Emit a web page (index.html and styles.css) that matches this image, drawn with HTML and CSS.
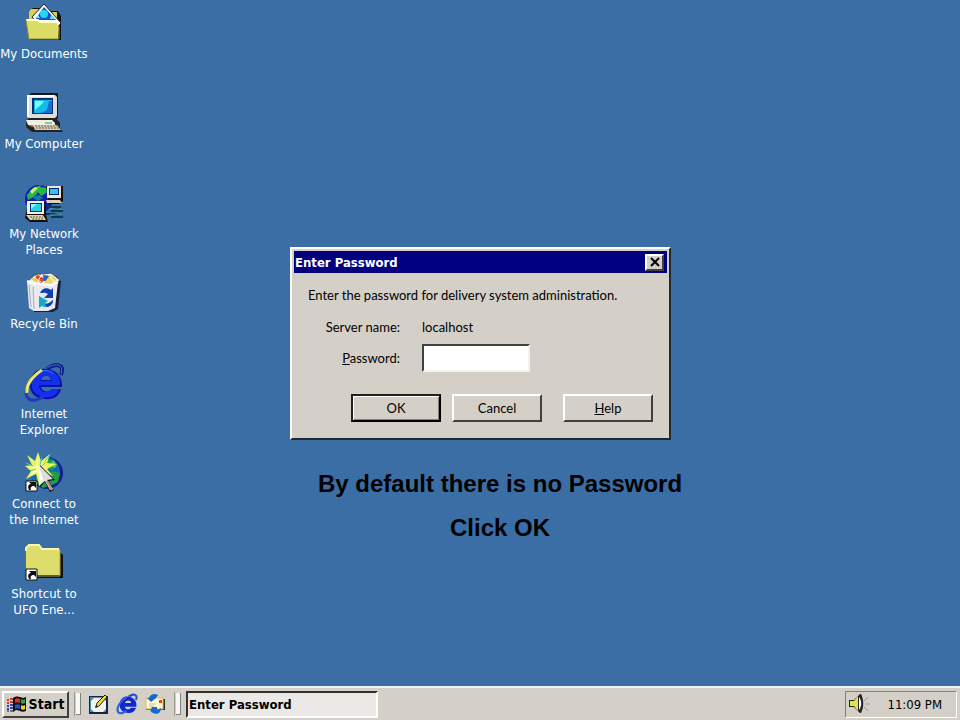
FILE: index.html
```html
<!DOCTYPE html>
<html lang="en">
<head>
    <meta charset="UTF-8">
    <meta name="viewport" content="width=device-width, initial-scale=1.0">
    <title>Enter Password</title>
    <link rel="stylesheet" href="styles.css">
</head>
<body>
    <main class="desktop">
        <nav class="icons">
            <a class="icon" href="#">
                <svg width="38" height="38" viewBox="0 0 38 38">
                    <path d="M5 35V7l3-3h8l3 3h14l3 5v24H6z" fill="#111"/>
                    <path d="M4 8l2-3h7l3 3h16v12H4z" fill="#d8d050"/>
                    <path d="M19 0l17 19-4 5-20-5-5-6z" fill="#fff" stroke="#223" stroke-width="1"/>
                    <path d="M19 3l12 13H10z" fill="#1c50c8"/>
                    <path d="M10 14l3-3 2 3zM26 11l4 4h-5z" fill="#70e8f0"/>
                    <circle cx="19" cy="10" r="4" fill="#20d8f0"/>
                    <path d="M1 16h10l2 2h19v3l2 2-1 12H4z" fill="#dcdc68"/>
                    <path d="M1 16h12l2 2h17" fill="none" stroke="#ffffd0" stroke-width="2"/>
                    <path d="M1 16l3 19h30V22" fill="none" stroke="#98903c"/>
                </svg>
                <span>My Documents</span>
            </a>
            <a class="icon" href="#">
                <svg width="38" height="38" viewBox="0 0 38 38">
                    <path d="M3 2l3-3h27v25l-3 3H6l-3-3z" fill="#181818"/>
                    <path d="M2 1h28l2 2v19l-3 3H4l-2-3z" fill="#ddd"/>
                    <path d="M2 1h27v2H4v20H2z" fill="#fff"/>
                    <path d="M7 4h21v16H7z" fill="#083070"/>
                    <path d="M9 6h18v13H9z" fill="#18b8e8"/>
                    <path d="M10 7h9l-2 3-7 6z" fill="#70fff0"/>
                    <path d="M24 7h3v12H16l6-3z" fill="#1870d0"/>
                    <path d="M1 27l3-3h27l4 5v5l3 4H7L1 33z" fill="#222"/>
                    <path d="M1 26h26l3 3v2H3z" fill="#f0ede4"/>
                    <path d="M3 31h25v2H7z" fill="#92846c"/>
                    <path d="M8 31h24l4 5H10z" fill="#d8d0b8"/>
                    <path d="M10 32h22M11 34h23" fill="none" stroke="#655b43" stroke-dasharray="2 1"/>
                    <path d="M20 29h7" stroke="#30a840" stroke-width="1"/>
                </svg>
                <span>My Computer</span>
            </a>
            <a class="icon" href="#">
                <svg width="38" height="38" viewBox="0 0 38 38">
                    <circle cx="14" cy="15" r="14" fill="#1020b0"/>
                    <path d="M2 11L8 4l8-3-2 6-4 5-7 4zM15 3l8 1-2 5-5 3-3-4z" fill="#28b848"/>
                    <path d="M5 7l5-4 3 1-6 6z" fill="#d0f060"/>
                    <path d="M7 13l7-2 4 3-5 3z" fill="#108090"/>
                    <path d="M21 2h17v15l-4 3H24z" fill="#111"/>
                    <path d="M22 2h14v12H22z" fill="#e8e8e0"/>
                    <path d="M24 4h10v7H24z" fill="#102070"/>
                    <path d="M25 5h8v5h-8z" fill="#28c8f0"/>
                    <path d="M21 16h14l2 3H22z" fill="#d8d2b8"/>
                    <path d="M22 23h14l-10 4h12M20 30h8l10 3H26" fill="none" stroke="#103850" stroke-width="2"/>
                    <path d="M24 25h13M25 31h12" stroke="#40a8a0" stroke-width="1"/>
                    <path d="M3 18h18v13l2 7H5l-5-4z" fill="#111"/>
                    <path d="M2 17h17v13H2z" fill="#f4f4ee"/>
                    <path d="M5 19h12v9H5z" fill="#102878"/>
                    <path d="M6 20h10v7H6z" fill="#28d0e8"/>
                    <path d="M6 20h6l-6 5z" fill="#90fff0"/>
                    <path d="M1 31h17l3 5H5z" fill="#ded3ac"/>
                    <path d="M5 33h13M7 35h12" stroke="#6a583a" stroke-dasharray="2 1"/>
                </svg>
                <span>My Network Places</span>
            </a>
            <a class="icon" href="#">
                <svg width="38" height="38" viewBox="0 0 38 38">
                    <path d="M9 3l8-3 14 2 5 5-3 28-5 3H9z" fill="#182038"/>
                    <path d="M3 7l7-6 16-2 9 7-7 6H8z" fill="#eee" stroke="#555"/>
                    <path d="M6 5l8-5 3 5-5 4z" fill="#e8d048"/>
                    <path d="M12 1l9 4-5 4-6-4z" fill="#d84838"/>
                    <path d="M18 1l9 1-3 6-5-1z" fill="#2860c8"/>
                    <path d="M25 1l7 4-6 5-7-1z" fill="#e8d860"/>
                    <path d="M8 3l8 5M17 0l-5 9M23 0l6 8" stroke="#fff" stroke-width="1"/>
                    <path d="M2 7l8 3 17 1 6-3-3 26-7 3H9l-5-3z" fill="#e8e9ee"/>
                    <path d="M2 7l8 3 17 1 6-3" fill="none" stroke="#fff" stroke-width="2"/>
                    <path d="M4 11l2 22M8 13l1 22" stroke="#aab" stroke-width="1"/>
                    <path d="M15 19c2-5 7-6 11-3l2-2v10h-9l4-4c-3-2-5-1-8-1z" fill="#1040b0"/>
                    <path d="M28 26c0 6-6 9-11 6l-3 2V22l9 5-3 2c3 1 5 0 8-3z" fill="#18a8c8"/>
                    <path d="M28 26c0 4-3 6-6 7l-2-3c4 0 5-2 8-4z" fill="#1838a8"/>
                </svg>
                <span>Recycle Bin</span>
            </a>
            <a class="icon" href="#">
                <svg width="38" height="38" viewBox="0 0 38 38">
                    <path d="M22 5C32-2 40 1 36 11" fill="none" stroke="#102080" stroke-width="4"/>
                    <path d="M22 4C32-2 39 1 36 10" fill="none" stroke="#4074f0" stroke-width="1"/>
                    <path d="M37 23H16c1 5 8 6 11 2h9c-2 8-8 11-16 10C10 35 4 28 5 19 6 9 13 4 21 5c10 0 17 8 16 18zM16 16h10c-1-6-9-5-10 0z" fill="#0a12a8" fill-rule="evenodd"/>
                    <path d="M35 21H14c0 8 9 9 13 4h7c-3 7-8 9-14 8C11 32 6 27 7 19 8 11 14 6 21 6c9 0 15 7 14 15zM15 17h12c-1-7-11-7-12 0z" fill="#1430ee" fill-rule="evenodd"/>
                    <path d="M13 9c4-4 13-3 15 1" fill="none" stroke="#4878ff"/>
                    <path d="M12 11C4 18-2 30 3 34c3 4 11 2 16-2" fill="none" stroke="#2038c0" stroke-width="3"/>
                    <path d="M17 6C8 12 1 20 2 29" fill="none" stroke="#e8df50" stroke-width="3"/>
                    <path d="M15 8C8 13 2 21 2 28" fill="none" stroke="#fff6a0" stroke-width="1"/>
                </svg>
                <span>Internet Explorer</span>
            </a>
            <a class="icon" href="#">
                <svg width="38" height="38" viewBox="0 0 38 38">
                    <circle cx="22" cy="19" r="16" fill="#10208c"/>
                    <circle cx="20" cy="18" r="15" fill="#1068b8"/>
                    <path d="M20 4l8 3 3 5-4 4-9-2zM26 17l9 2-2 9-6 3-3-6zM11 23l7 1 5 8-5 2-7-5z" fill="#20a040"/>
                    <path d="M28 6l4 5-2 3-5-3z" fill="#58cc58"/>
                    <path d="M13-2l3 9 9-7-3 9 9 1-9 5 6 7-10-4-4 12-3-10-10 5 5-8-6-5 7-1-5-10 8 6z" fill="#e9f463"/>
                    <path d="M13 4l1 8 6-5-3 7 6 1-7 2-1 6-3-5-7 3 4-6-5-2 7-1z" fill="#fffcac"/>
                    <path d="M17 3l-2 8M5 17l6-2M21 8l-5 5M24 2l-4 5M1 9l7 3" stroke="#48c8a0" stroke-width="1"/>
                    <path d="M15 11l15 15-7 1 6 9-4 2-5-10-5 5z" fill="#111"/>
                    <path d="M14 11l14 14-6 1 6 9-3 1-5-9-6 5z" fill="#ddd"/>
                    <path d="M14 12v19l4-5z" fill="#fff"/>
                    <path d="M22 27l5 9" stroke="#c98a78" stroke-width="2"/>
                    <path d="M1 27h11v10H1z" fill="#fff" stroke="#111"/>
                    <path d="M4 36c-2-4 0-6 2-6l-2-2h7v6l-2-2c-3 0-4 2-3 4z" fill="#111"/>
                </svg>
                <span>Connect to the Internet</span>
            </a>
            <a class="icon" href="#">
                <svg width="38" height="38" viewBox="0 0 38 38">
                    <path d="M3 7l3-3 10 1 2 3h17l3 3v23H5z" fill="#111"/>
                    <path d="M1 7V4l3-3h10l3 4h17l1 1v25H1z" fill="#dddd6c"/>
                    <path d="M1 7V4l3-3h10l3 4h17" fill="none" stroke="#faf7b0" stroke-width="2"/>
                    <path d="M35 7v25H3" fill="none" stroke="#aaa34a"/>
                    <path d="M1 25h11v11H1z" fill="#fff" stroke="#111"/>
                    <path d="M4 35c-2-4 0-6 2-6l-2-2h7v6l-2-2c-3 0-4 2-3 4z" fill="#111"/>
                </svg>
                <span>Shortcut to UFO Ene...</span>
            </a>
        </nav>

        <form class="dialog">
            <header class="titlebar">
                <h1>Enter Password</h1>
                <button type="button" class="close" aria-label="Close">
                    <svg width="12" height="10" viewBox="0 0 12 10"><path d="M2 1l8 8M10 1L2 9" stroke="#000" stroke-width="2"/></svg>
                </button>
            </header>
            <div class="dialog-body">
                <p>Enter the password for delivery system administration.</p>
                <div class="fields">
                    <span class="field-label">Server name:</span>
                    <span>localhost</span>
                    <label class="field-label" for="password"><u>P</u>assword:</label>
                    <input type="password" id="password" name="password">
                </div>
                <div class="buttons">
                    <button type="submit" class="default">OK</button>
                    <button type="button">Cancel</button>
                    <button type="button" class="help"><u>H</u>elp</button>
                </div>
            </div>
        </form>

        <div class="note">
            <p>By default there is no Password</p>
            <p>Click OK</p>
        </div>
    </main>

    <footer class="taskbar">
        <button type="button" class="start">
            <svg width="20" height="18" viewBox="0 0 20 18">
                <path d="M6 3c4-3 7-1 10 0l3-1v14c-4 2-7-1-10-1l-3 2z" fill="#111"/>
                <path d="M8 4c2-1 3-1 5 0v4c-2-1-3-1-5 0z" fill="#e03020"/>
                <path d="M14 4c1 1 3 1 4 0v4c-1 1-3 1-4 0z" fill="#30a838"/>
                <path d="M8 10c2-1 3-1 5 0v4c-2-1-3-1-5 0z" fill="#2050d8"/>
                <path d="M14 10c1 1 3 1 4 0v4c-1 1-3 1-4 0z" fill="#e8d828"/>
                <path d="M0 5h2M3 4h3M0 8h2M3 7h3" stroke="#d03830" stroke-width="2"/>
                <path d="M0 11h2M3 10h3M0 14h2M3 13h3" stroke="#2848c8" stroke-width="2"/>
                <path d="M0 16h2M3 16h3" stroke="#111" stroke-width="1"/>
            </svg>
            Start
        </button>
        <span class="grip"></span>
        <div class="quick">
            <button type="button" aria-label="Show Desktop">
                <svg width="20" height="20" viewBox="0 0 20 20">
                    <path d="M0 2h19v18H0z" fill="#102848"/>
                    <path d="M1 3h16v15H1z" fill="#4890b0"/>
                    <path d="M5 4h9l3 3v8l-3 3H5l-3-3V7z" fill="#f2f2ee"/>
                    <path d="M7 13l1-4 8-8 2 2-8 9z" fill="#f0d840" stroke="#222"/>
                    <path d="M6 14l1-3 2 2z" fill="#222"/>
                </svg>
            </button>
            <button type="button" aria-label="Internet Explorer">
                <svg width="20" height="20" viewBox="0 0 38 38">
                    <path d="M22 5C32-2 40 1 36 11" fill="none" stroke="#2050d8" stroke-width="4"/>
                    <path d="M37 24H15c1 6 9 7 11 2h10c-2 8-8 10-15 10C10 35 4 28 5 19 6 9 13 4 21 5c10 0 17 8 16 19zM15 17h12c-1-7-11-6-12 0z" fill="#1028d0" fill-rule="evenodd"/>
                    <path d="M18 6C7 12-2 27 2 34c3 5 11 2 16-2" fill="none" stroke="#2860e8" stroke-width="4"/>
                </svg>
            </button>
            <button type="button" aria-label="Outlook Express">
                <svg width="20" height="20" viewBox="0 0 20 20">
                    <path d="M1 5h19v11H1z" fill="#333"/>
                    <path d="M1 4h17v11H1z" fill="#fff8d8" stroke="#e0b850"/>
                    <path d="M14 6h3v3h-3z" fill="#d84820"/>
                    <path d="M4 10h7M4 12h5" stroke="#bbb"/>
                    <path d="M6 8L2 4h2c1-4 6-5 9-3l-2 3-2 0 2 0z" fill="#1868c8"/>
                    <path d="M8 19c-3-1-3-4-1-5l-1-1h6v6l-1-2 5-3c0 5-4 7-8 5z" fill="#1868c8"/>
                </svg>
            </button>
        </div>
        <span class="grip"></span>
        <button type="button" class="task">Enter Password</button>
        <div class="tray">
            <svg width="22" height="20" viewBox="0 0 22 20">
                <path d="M0 6h5l6-6h1c3 6 3 13 0 19h-1l-6-6H0z" fill="#222"/>
                <path d="M1 7h4l4-5v15l-4-5H1z" fill="#e4e440"/>
                <path d="M10 3c3 4 3 9 0 13z" fill="#fff"/>
                <path d="M15 7l4-4M16 10h5M15 13l4 4" stroke="#999"/>
            </svg>
            <time>11:09 PM</time>
        </div>
    </footer>
</body>
</html>
```
FILE: styles.css
```css
* {
    box-sizing: border-box;
}

body {
    margin: 0;
    min-height: 100vh;
    display: flex;
    flex-direction: column;
    background-color: #3a6ea5;
    color: #000;
    font-family: "DejaVu Sans Condensed", "DejaVu Sans", sans-serif;
    font-size: 13px;
}

h1, p {
    margin: 0;
}

button {
    font: inherit;
    color: #000;
    padding: 0;
    background: #d4d0c8;
    border: 2px solid;
    border-color: #fff #404040 #404040 #fff;
}

svg {
    display: block;
    flex: none;
    overflow: visible;
}

.desktop {
    flex: 1;
    position: relative;
}

/* desktop icons */
.icons {
    display: flex;
    flex-direction: column;
    width: 88px;
    padding-top: 4px;
}

.icon {
    display: flex;
    flex-direction: column;
    align-items: center;
    gap: 4px;
    height: 90px;
    color: #fff;
    text-align: center;
    text-decoration: none;
    line-height: 16px;
}

.icon span {
    max-width: 80px;
}

.icon:nth-child(-n+2) span {
    max-width: none;
    white-space: nowrap;
}

/* password window */
.dialog {
    position: absolute;
    left: 290px;
    top: 247px;
    width: 381px;
    background: #d4d0c8;
    border: 2px solid;
    border-color: #fff #202830 #202830 #fff;
    padding: 2px;
    font-family: Lato, "Liberation Sans", sans-serif;
}

.titlebar {
    display: flex;
    align-items: center;
    justify-content: space-between;
    height: 22px;
    padding: 0 3px 0 1px;
    background: #000080;
    color: #fff;
}

.titlebar h1 {
    font: bold 13px "DejaVu Sans Condensed", "DejaVu Sans", sans-serif;
}

.close {
    display: flex;
    align-items: center;
    justify-content: center;
    width: 19px;
    height: 17px;
}

.dialog-body {
    padding: 14px 14px;
    line-height: 16px;
}

.fields {
    display: grid;
    grid-template-columns: 92px 108px;
    grid-template-rows: 30px 32px;
    column-gap: 22px;
    align-items: center;
    margin-top: 9px;
}

.field-label {
    text-align: right;
}

.fields input {
    width: 100%;
    height: 28px;
    padding: 2px 4px;
    background: #fff;
    border: 2px solid;
    border-color: #404040 #f4f2ee #f4f2ee #404040;
    outline: none;
}

.buttons {
    display: flex;
    gap: 11px;
    justify-content: flex-end;
    margin-top: 20px;
}

.buttons button {
    width: 90px;
    height: 28px;
}

.buttons .default {
    border-color: #202020 #000 #000 #202020;
    box-shadow: inset 1px 1px #fff, inset -1px -1px #808080;
}

.buttons .help {
    margin-left: 10px;
}

.note {
    position: absolute;
    left: 318px;
    top: 462px;
    font: bold 24px/44px "Liberation Sans", Arial, sans-serif;
    text-align: center;
}

/* taskbar */
.taskbar {
    display: flex;
    align-items: center;
    height: 34px;
    padding: 0 3px 0 2px;
    gap: 5px;
    background: #d4d0c8;
    border-top: 2px solid #f4f2ee;
}

.start {
    display: flex;
    align-items: center;
    justify-content: center;
    gap: 2px;
    width: 67px;
    height: 27px;
    font-size: 14px;
    font-weight: bold;
}

.grip {
    display: flex;
    justify-content: flex-end;
    width: 7px;
    height: 24px;
    border-left: 1px solid #9a968e;
}

.grip::after {
    content: "";
    width: 4px;
    margin: 1px 0;
    background: #f8f6f2;
    border-right: 1px solid #808080;
    border-bottom: 1px solid #808080;
}

.quick {
    display: flex;
    gap: 8px;
    padding: 0 4px 0 3px;
}

.quick button {
    border: none;
}

.task {
    width: 192px;
    height: 27px;
    padding-left: 1px;
    background: #ebe9e5;
    border-color: #303030 #fff #fff #303030;
    font-weight: bold;
    text-align: left;
}

.tray {
    display: flex;
    align-items: center;
    justify-content: space-between;
    width: 112px;
    height: 27px;
    margin-left: auto;
    padding: 0 14px 0 3px;
    border: 1px solid;
    border-color: #808080 #fff #fff #808080;
}
```
